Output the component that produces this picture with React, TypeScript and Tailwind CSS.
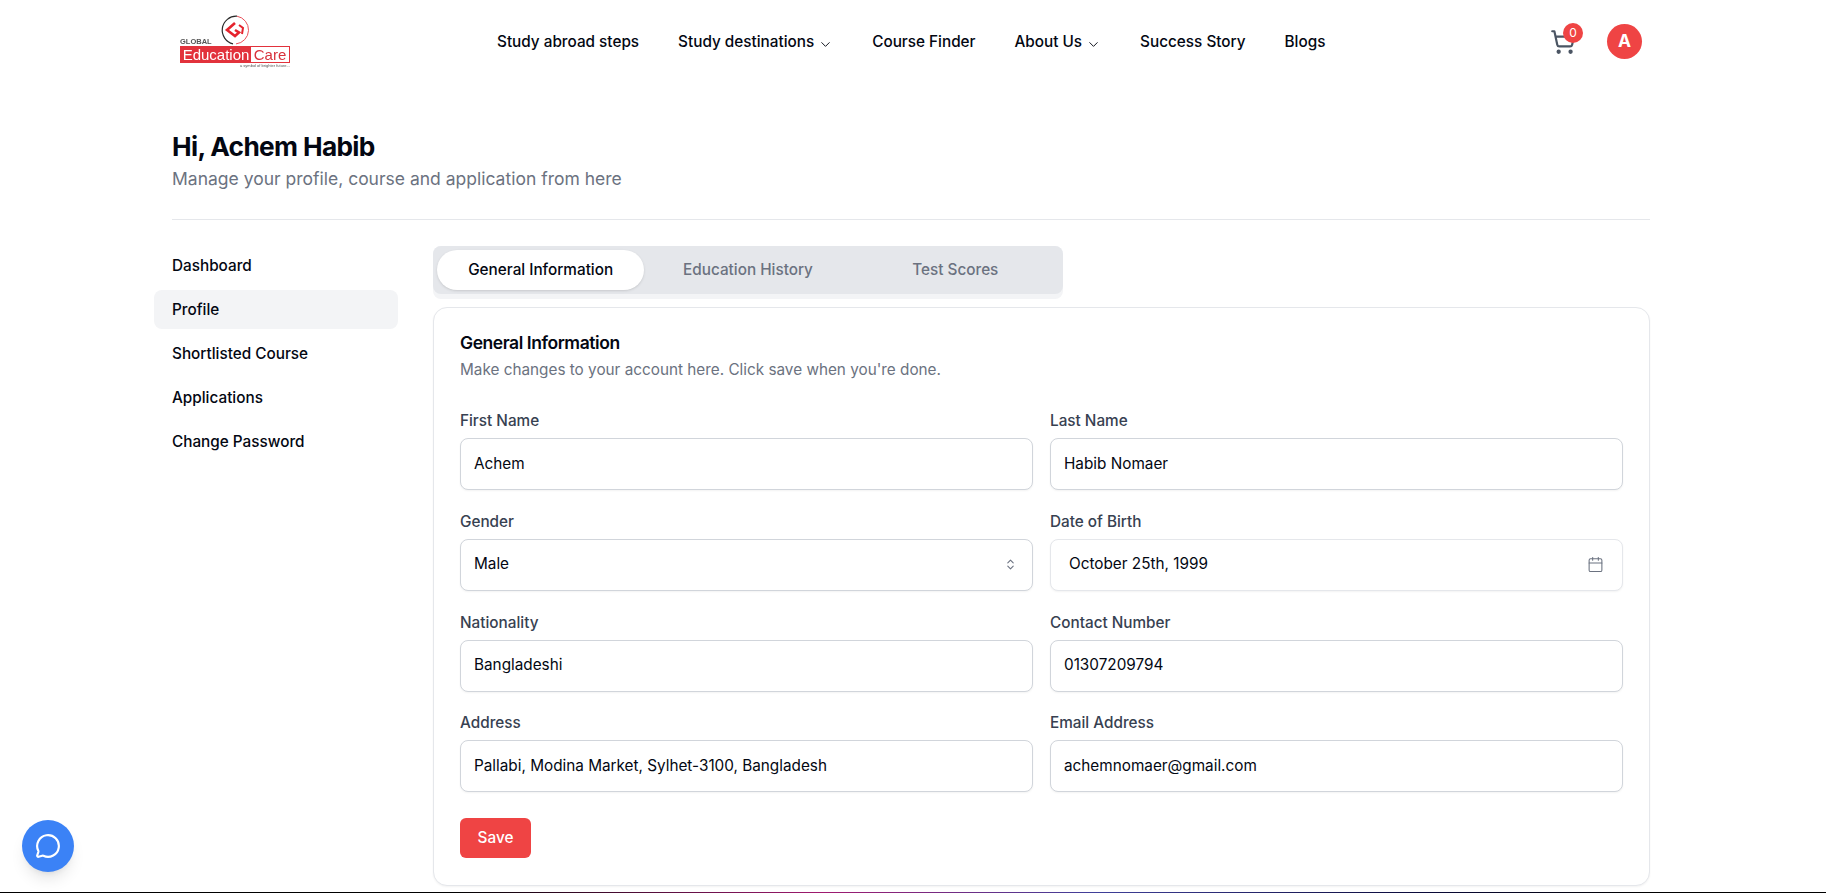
import { Calendar, ChevronDown, ChevronsUpDown, MessageCircle, ShoppingCart } from "lucide-react";

const navLinks = [
  { label: "Study abroad steps" },
  { label: "Study destinations", caret: true },
  { label: "Course Finder" },
  { label: "About Us", caret: true },
  { label: "Success Story" },
  { label: "Blogs" },
];

const sideLinks = ["Dashboard", "Profile", "Shortlisted Course", "Applications", "Change Password"];

const Logo = () => (
  <div className="relative mt-[6px] h-[72px] w-[120px] shrink-0 blur-[0.3px] [font-family:'Liberation_Sans',sans-serif]">
    <svg viewBox="0 0 30 30" className="absolute left-[48px] top-[6px] h-[30px] w-[30px]" fill="none">
      <path d="M17 1.2 A 14 14 0 0 0 13 28.8" stroke="#2a2a2a" strokeWidth="1.2" />
      <path d="M17 1.2 A 14 14 0 0 1 16 28.9" stroke="#e8505a" strokeWidth="1" />
      <path d="M15 8 L7 15 L15 21 L19 17.5 L15 15" stroke="#e5232d" strokeWidth="2.6" />
      <path d="M19 10 L23 13 L22 19" stroke="#e5232d" strokeWidth="2" />
    </svg>
    <span className="absolute left-[8px] top-[28px] text-[7.5px] font-bold leading-[10px] text-[#555]">GLOBAL</span>
    <div className="absolute left-[8px] top-[37px] flex h-[17px] w-[110px] items-center border border-[#e2323c] bg-white text-[15px] leading-none">
      <span className="flex h-full w-[70px] items-center justify-center bg-[#e2323c] text-white">Education</span>
      <span className="flex-1 text-center text-[#d8323c]">Care</span>
    </div>
    <span className="absolute left-[68px] top-[54px] text-[4px] leading-[6px] text-[#555]">a symbol of brighter future...</span>
  </div>
);

const Field = ({ label, value }: { label: string; value: string }) => (
  <div className="flex flex-col">
    <label className="mb-[7px] text-[15.3px] font-medium leading-[21px] text-[#374151]">{label}</label>
    <div className="flex h-[52px] items-center rounded-lg border border-[#d1d5db] bg-white px-[13px] text-[15.3px] text-[#030712] shadow-xs">
      {value}
    </div>
  </div>
);

export default function App() {
  return (
    <div className="relative h-[893px] overflow-hidden bg-white [font-family:Inter,sans-serif]">
      {/* Navbar */}
      <nav className="flex h-[83px] items-center pl-[172px] pr-[184px]">
        <Logo />
        <ul className="ml-[205px] mt-[2px] flex items-center gap-[39px] text-[15.3px] font-medium text-[#030712]">
          {navLinks.map((link) => (
            <li key={link.label} className="flex items-center gap-[4px]">
              {link.label}
              {link.caret && <ChevronDown className="mt-[3px] h-[15px] w-[15px]" strokeWidth={1.5} />}
            </li>
          ))}
        </ul>
        <div className="ml-auto flex items-center gap-[31px]">
          <div className="relative">
            <ShoppingCart className="h-[26px] w-[26px] text-[#4b5563]" strokeWidth={2} />
            <span className="absolute -right-[7px] -top-[6px] flex h-[20px] w-[20px] items-center justify-center rounded-full bg-[#ef4444] text-[12px] text-white">
              0
            </span>
          </div>
          <div className="flex h-[35px] w-[35px] items-center justify-center rounded-full bg-[#ef4444] text-[17.5px] font-bold text-white">
            A
          </div>
        </div>
      </nav>

      <main className="pl-[172px] pr-[176px]">
        <div className="border-b border-[#e5e7eb] pb-[27px] pt-[48px]">
          <h1 className="text-[26.25px] font-bold leading-[32px] tracking-tight text-[#030712]">Hi, Achem Habib</h1>
          <p className="mt-[3px] text-[17.5px] leading-[26px] text-[#6b7280]">Manage your profile, course and application from here</p>
        </div>

        <div className="mt-[26px] flex">
          {/* Sidebar */}
          <aside className="-ml-[18px] w-[244px] shrink-0">
            <ul className="flex flex-col gap-[5px] text-[15.3px] font-medium text-[#030712]">
              {sideLinks.map((item) => (
                <li
                  key={item}
                  className={`flex h-[39px] items-center rounded-lg px-[18px] pt-[2px] ${item === "Profile" ? "bg-[#f3f4f6]" : ""}`}
                >
                  {item}
                </li>
              ))}
            </ul>
          </aside>

          {/* Content */}
          <section className="ml-[35px] flex-1">
            <div className="w-[630px] rounded-lg bg-[#f3f4f6] pb-[5px]">
              <div className="flex h-[48px] items-center rounded-lg bg-[#e5e7eb] px-1 text-[15.3px] font-medium text-[#6b7280]">
                <span className="flex h-[40px] flex-1 items-center justify-center rounded-full bg-white pt-[1px] text-[#030712] shadow">
                  General Information
                </span>
                <span className="flex flex-1 justify-center pt-[1px]">Education History</span>
                <span className="flex flex-1 justify-center pt-[1px]">Test Scores</span>
              </div>
            </div>

            <div className="mt-[8px] rounded-[14px] border border-[#e5e7eb] bg-white px-[26px] pb-[27px] pt-[22px] shadow-xs">
              <h2 className="text-[17.5px] font-semibold leading-[26px] tracking-tight text-[#030712]">General Information</h2>
              <p className="mt-[3px] text-[15.3px] leading-[22px] text-[#6b7280]">Make changes to your account here. Click save when you're done.</p>

              <div className="mt-[29px] grid grid-cols-2 gap-x-[17px] gap-y-[20.8px]">
                <Field label="First Name" value="Achem" />
                <Field label="Last Name" value="Habib Nomaer" />
                <div className="flex flex-col">
                  <label className="mb-[7px] text-[15.3px] font-medium leading-[21px] text-[#374151]">Gender</label>
                  <div className="flex h-[52px] items-center justify-between rounded-lg border border-[#d1d5db] bg-white pl-[13px] pr-[15px] text-[15.3px] text-[#030712] shadow-xs">
                    Male
                    <ChevronsUpDown className="h-[13px] w-[13px] text-[#6b7280]" />
                  </div>
                </div>
                <div className="flex flex-col">
                  <label className="mb-[7px] text-[15.3px] font-medium leading-[21px] text-[#374151]">Date of Birth</label>
                  <div className="flex h-[52px] items-center justify-between rounded-lg border border-[#e5e7eb] bg-white pl-[18px] pr-[18px] text-[15.3px] text-[#030712] shadow-xs">
                    October 25th, 1999
                    <Calendar className="h-[17px] w-[17px] text-[#6b7280]" strokeWidth={1.5} />
                  </div>
                </div>
                <Field label="Nationality" value="Bangladeshi" />
                <Field label="Contact Number" value="01307209794" />
                <Field label="Address" value="Pallabi, Modina Market, Sylhet-3100, Bangladesh" />
                <Field label="Email Address" value="achemnomaer@gmail.com" />
              </div>

              <button className="mt-[26px] h-[40px] w-[71px] rounded-md bg-[#ef4444] text-[15.3px] font-medium text-white">Save</button>
            </div>
          </section>
        </div>
      </main>

      <button className="absolute bottom-[21px] left-[22px] flex h-[52px] w-[52px] items-center justify-center rounded-full bg-[#3b82f6] text-white shadow-lg">
        <MessageCircle className="h-[26px] w-[26px]" strokeWidth={2} />
      </button>
      <div className="absolute bottom-0 left-0 h-px w-full bg-[linear-gradient(to_right,#000_25%,#a01a70_45%,#40409a_60%,#0a0a3a_78%,#000_90%)]" />
    </div>
  );
}
